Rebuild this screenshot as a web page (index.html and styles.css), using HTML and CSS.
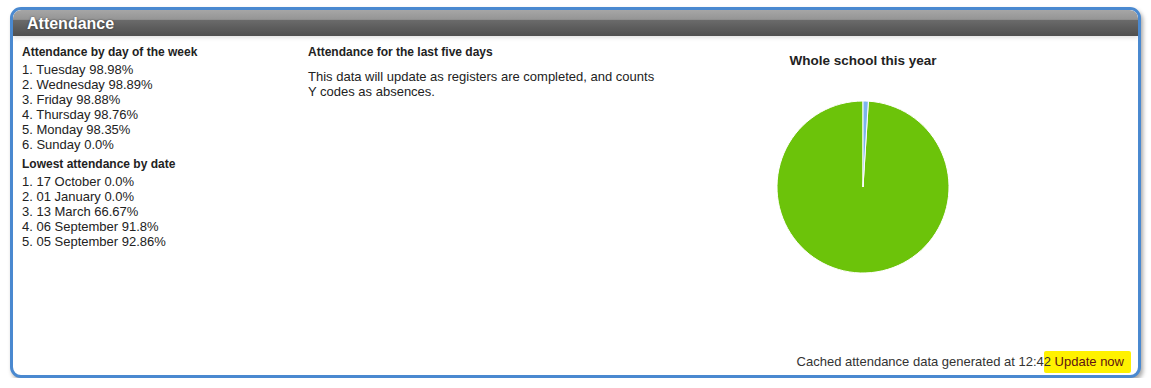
FILE: index.html
```html
<!DOCTYPE html>
<html lang="en">

<head>
    <meta charset="UTF-8">
    <meta name="viewport" content="width=device-width, initial-scale=1.0">
    <title>Attendance</title>
    <link rel="stylesheet" href="styles.css">
</head>

<body>
    <div class="panel">
        <div class="panelHead">Attendance</div>
        <div class="panelBody">
            <div class="col colDays">
                <h4>Attendance by day of the week</h4>
                <ol>
                    <li>1. Tuesday 98.98%</li>
                    <li>2. Wednesday 98.89%</li>
                    <li>3. Friday 98.88%</li>
                    <li>4. Thursday 98.76%</li>
                    <li>5. Monday 98.35%</li>
                    <li>6. Sunday 0.0%</li>
                </ol>
                <h4>Lowest attendance by date</h4>
                <ol>
                    <li>1. 17 October 0.0%</li>
                    <li>2. 01 January 0.0%</li>
                    <li>3. 13 March 66.67%</li>
                    <li>4. 06 September 91.8%</li>
                    <li>5. 05 September 92.86%</li>
                </ol>
            </div>
            <div class="col colLast">
                <h4>Attendance for the last five days</h4>
                <p>This data will update as registers are completed, and counts Y codes as absences.</p>
            </div>
            <div class="col chart">
                <div class="chartTitle">Whole school this year</div>
                <svg class="pie" width="386" height="180" viewBox="0 0 386 180">
                    <path d="M193 90 L198.4 4.17 A86 86 0 1 1 193 4 Z" fill="#6cc30a" stroke="#fff" stroke-width="1"/>
                    <path d="M193 90 L193 4 A86 86 0 0 1 198.4 4.17 Z" fill="#7cb5ec" stroke="#fff" stroke-width="1"/>
                </svg>
            </div>
        </div>
        <div class="panelFoot">
            Cached attendance data generated at 12:4<span class="hl">2 <a href="#">Update now</a></span>
        </div>
    </div>
</body>

</html>
```

FILE: styles.css
```css
* {
    margin: 0;
    padding: 0;
    box-sizing: border-box;
}
html,body{
    background-color: #fff;
}
body {
    font-family: "Liberation Sans", Arial, sans-serif;
    font-size: 13px;
    color: #222;
}

.panel {
    margin: 7px 10px 0 10px;
    width: 1131px;
    height: 371px;
    border: 3px solid #4a89d0;
    border-radius: 11px;
    background-color: #fff;
    box-shadow: 2px 3px 4px rgba(0, 0, 0, 0.35);
    display: flex;
    flex-direction: column;
    overflow: hidden;
}

.panelHead {
    height: 26px;
    padding-left: 14px;
    line-height: 27px;
    font-size: 16px;
    font-weight: bold;
    color: #fff;
    text-shadow: 0 0 2px rgba(0, 0, 0, 0.5);
    background: linear-gradient(#a6a6a6 0, #959595 36%, #6a6a6a 40%, #5c5c5c 70%, #4f4f4f 100%);
    border-radius: 8px 8px 0 0;
    box-shadow: 0 2px 4px rgba(0, 0, 0, 0.12);
}

.panelBody {
    flex: 1;
    display: flex;
    padding: 6px 0 0 9px;
}

.col {
    padding-top: 3px;
}

.colDays {
    width: 286px;
}

.colLast {
    width: 362px;
}

.colLast p {
    width: 350px;
    margin-top: 9px;
    line-height: 15px;
}

h4 {
    font-size: 12px;
    line-height: 15px;
}

ol {
    list-style: none;
    margin: 2px 0 5px;
}

li {
    line-height: 15px;
}

.chart {
    width: 386px;
    padding-top: 11px;
    background-color: #fff;
}

.chartTitle {
    text-align: center;
    font-weight: bold;
    font-size: 13.5px;
    line-height: 15px;
}

.pie {
    display: block;
    margin-top: 29px;
}

.panelFoot {
    text-align: right;
    padding: 0 7px 2px 0;
    line-height: 22px;
    color: #333;
}

.hl {
    display: inline-block;
    background-color: #fff200;
    padding-right: 7px;
    border-radius: 2px;
}

.hl a {
    color: #5e1212;
    text-decoration: none;
}
```
